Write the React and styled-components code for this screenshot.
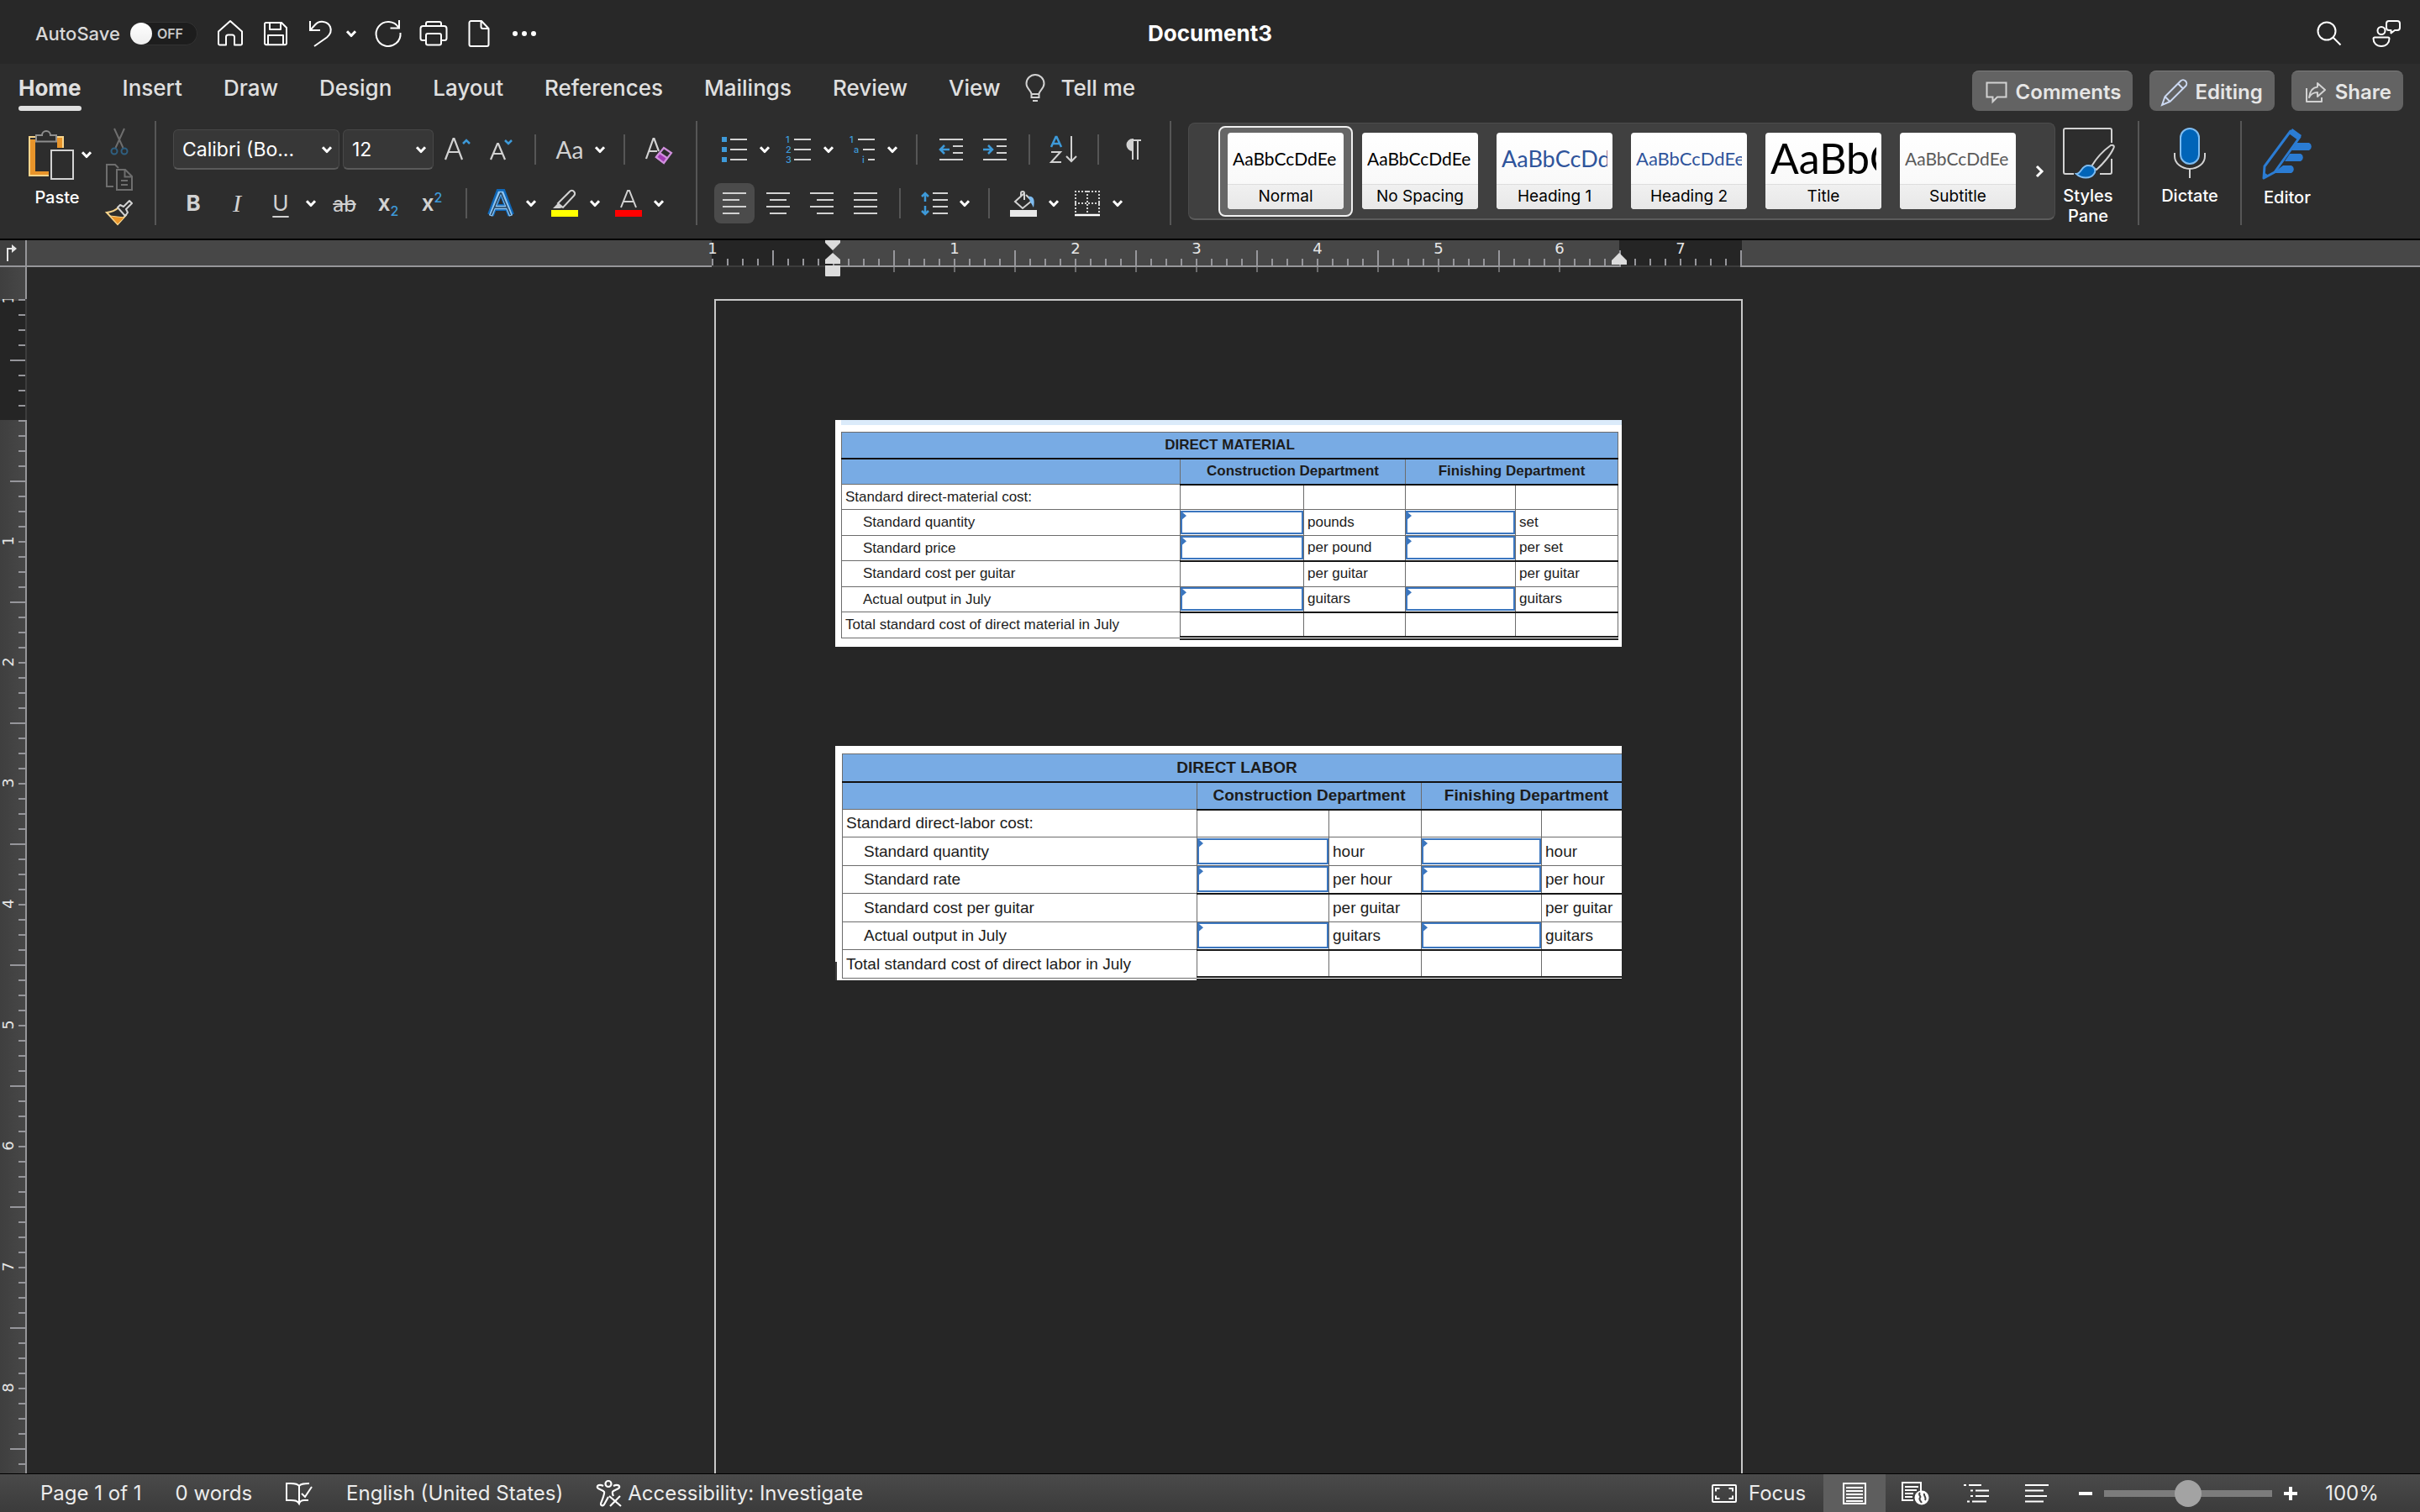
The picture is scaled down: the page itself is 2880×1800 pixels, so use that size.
import React from "react";
import styled, { createGlobalStyle, css } from "styled-components";

const UI = `Inter, "Liberation Sans", sans-serif`;
const SHEET = `"Liberation Sans", Arial, sans-serif`;
const SAMPLE = `Lato, "Open Sans", sans-serif`;

const GlobalStyle = createGlobalStyle`
  *, *::before, *::after { box-sizing: border-box; }
  html, body { margin: 0; background: #282828; }
  body { font-family: ${UI}; color: #e0e0e0; }
  button, input, select { font: inherit; color: inherit; margin: 0; }
  svg { display: block; flex: none; overflow: visible; }
`;

/* ---------- shell ---------- */

const Window = styled.div`
  height: 100vh;
  display: flex;
  flex-direction: column;
  overflow: hidden;
  background: #282828;
`;

const TitleBar = styled.header`
  flex: none;
  height: 76px;
  padding: 4px 17px 0;
  display: grid;
  grid-template-columns: 1fr auto 1fr;
  align-items: center;
  background: #282828;
`;

const TitleGroup = styled.div`
  display: flex;
  align-items: center;
  gap: ${(p) => p.$gap || 8}px;
  padding-left: 25px;
  justify-content: ${(p) => (p.$end ? "flex-end" : "flex-start")};
`;

const DocTitle = styled.h1`
  margin: 0;
  font-size: 26px;
  line-height: 32px;
  font-weight: 700;
  color: #fff;
`;

const AutoSave = styled.label`
  display: flex;
  align-items: center;
  gap: 12px;
  margin-right: 8px;
  font-size: 22px;
  line-height: 28px;
  font-weight: 500;
  color: #d8d8d8;
`;

const Switch = styled.span`
  display: flex;
  align-items: center;
  gap: 6px;
  width: 80px;
  height: 28px;
  border-radius: 14px;
  background: #1d1d1d;
  box-shadow: inset 0 0 0 1px #333;
  font-size: 16px;
  font-weight: 600;
  color: #c8c8c8;
`;

const SwitchInput = styled.input`
  appearance: none;
  width: 26px;
  height: 26px;
  border-radius: 50%;
  background: linear-gradient(#fff, #eee);
`;

const IconButton = styled.button`
  flex: none;
  display: flex;
  align-items: center;
  justify-content: center;
  width: ${(p) => p.$w || 48}px;
  height: 48px;
  padding: 0;
  border: 0;
  border-radius: 8px;
  background: ${(p) => (p.$active ? "#4b4b4b" : "transparent")};
`;

const Split = styled.div`
  display: flex;
  flex: none;
`;

/* ---------- tabs ---------- */

const TabBar = styled.nav`
  flex: none;
  height: 68px;
  padding: 8px 20px 0 22px;
  display: flex;
  align-items: flex-start;
  justify-content: space-between;
  background: #2d2d2d;
`;

const Tabs = styled.div`
  display: flex;
  align-items: flex-start;
  gap: ${(p) => p.$gap}px;
`;

const Tab = styled.button`
  display: flex;
  align-items: center;
  gap: 18px;
  padding: 5px 0 0;
  border: 0;
  background: none;
  font-size: 26px;
  line-height: 32px;
  font-weight: ${(p) => (p.$active ? 700 : 500)};
  color: #e0e0e0;
  position: relative;
  &::after {
    content: "";
    display: ${(p) => (p.$active ? "block" : "none")};
    position: absolute;
    left: 0;
    right: 0;
    bottom: -11px;
    height: 6px;
    border-radius: 3px;
    background: #e0e0e0;
  }
`;

const TabActions = styled.div`
  display: flex;
  gap: 20px;
`;

const ActionButton = styled.button`
  display: flex;
  align-items: center;
  gap: 10px;
  height: 48px;
  padding: 2px 14px 0 16px;
  border: 0;
  border-top: 1px solid #7a7a7a;
  border-radius: 8px;
  background: #636363;
  font-size: 24px;
  font-weight: 600;
  color: #e6e6e6;
`;

/* ---------- ribbon ---------- */

const Ribbon = styled.section`
  flex: none;
  height: 142px;
  padding-left: 32px;
  display: flex;
  align-items: flex-start;
  background: #2d2d2d;
  border-bottom: 2px solid #000;
`;

const GroupRule = styled.div`
  flex: none;
  width: 2px;
  height: 124px;
  margin: 0 20px;
  background: #565656;
`;

const Rows = styled.div`
  flex: none;
  display: flex;
  flex-direction: column;
  gap: 16px;
  padding-top: 10px;
`;

const Row = styled.div`
  display: flex;
  align-items: center;
  gap: 4px;
  height: 48px;
`;

const Rule = styled.div`
  flex: none;
  width: 2px;
  height: 36px;
  margin: 0 12px;
  background: #565656;
`;

const SelectBox = styled.div`
  display: grid;
  align-items: center;
  width: ${(p) => p.$w}px;
  height: 48px;
  & > * { grid-area: 1 / 1; }
  & > svg { justify-self: end; margin-right: 9px; pointer-events: none; }
`;

const Select = styled.select`
  appearance: none;
  width: 100%;
  height: 48px;
  padding: 0 10px;
  border: 1px solid #484848;
  border-bottom: 2px solid #5a5a5a;
  border-radius: 6px;
  background: #373737;
  font-size: 23px;
  color: #fff;
`;

const PasteGroup = styled.div`
  flex: none;
  display: flex;
  width: 132px;
  padding-top: 2px;
  justify-content: space-between;
`;

const SmallStack = styled.div`
  display: flex;
  flex-direction: column;
`;

const SmallButton = styled.button`
  width: 44px;
  height: 43px;
  padding: 0;
  display: flex;
  align-items: center;
  justify-content: center;
  border: 0;
  background: none;
`;

const BigButton = styled.button`
  flex: none;
  width: ${(p) => p.$w || 78}px;
  padding: ${(p) => p.$top ?? 8}px 0 0;
  display: flex;
  flex-direction: column;
  align-items: center;
  gap: 9px;
  border: 0;
  background: none;
  font-size: 20px;
  line-height: 24px;
  font-weight: 500;
  color: #fff;
`;

const IconPair = styled.span`
  display: flex;
  align-items: center;
  gap: 9px;
`;

const PasteLabel = styled.span`
  padding-right: 6px;
`;

const Gallery = styled.div`
  flex: 0 1 1032px;
  min-width: 0;
  height: 116px;
  margin-top: 2px;
  padding: 0 7px 0 35px;
  display: flex;
  align-items: center;
  justify-content: space-between;
  border: 1px solid #4c4c4c;
  border-bottom: 2px solid #5c5c5c;
  border-radius: 8px;
  background: #404040;
`;

const Cards = styled.div`
  display: flex;
  flex: none;
`;

const CardFrame = styled.button`
  width: 160px;
  height: 108px;
  padding: 6px 9px;
  border: 2px solid ${(p) => (p.$active ? "#f0f0f0" : "transparent")};
  border-radius: 8px;
  background: ${(p) => (p.$active ? "#666" : "none")};
`;

const Card = styled.span`
  display: grid;
  grid-template-rows: 61px 30px;
  height: 91px;
  border-radius: 4px;
  overflow: hidden;
  background: linear-gradient(#fff, #f6f6f6);
`;

const Sample = styled.span`
  display: flex;
  align-items: center;
  margin: 0 6px;
  overflow: hidden;
  white-space: nowrap;
  font-family: ${SAMPLE};
  font-size: ${(p) => p.$size}px;
  line-height: 61px;
  color: ${(p) => p.$color || "#000"};
`;

const CardName = styled.span`
  border-top: 1px solid #ddd;
  background: linear-gradient(#f0f0f0, #e8e8e8);
  font-size: 19px;
  line-height: 28px;
  color: #000;
`;

const MoreButton = styled.button`
  width: 22px;
  height: 48px;
  padding: 0;
  border: 0;
  background: none;
  display: flex;
  align-items: center;
  justify-content: center;
`;

/* ---------- workspace ---------- */

const RulerRow = styled.div`
  flex: none;
  height: 32px;
  display: flex;
  background: linear-gradient(#474747 30px, #969699 30px);
  position: relative;
  z-index: 1;
`;

const RulerCorner = styled.button`
  flex: none;
  width: 32px;
  height: 30px;
  padding: 0 0 0 7px;
  display: flex;
  align-items: center;
  border: 0;
  border-right: 2px solid #969699;
  background: #404040;
`;

const HRuler = styled.div`
  flex: 1;
  display: flex;
  justify-content: center;
  padding-left: 8px;
`;

const Work = styled.div`
  flex: 1;
  min-height: 0;
  display: flex;
  overflow: hidden;
`;

const VRuler = styled.div`
  flex: none;
  width: 32px;
  background: linear-gradient(90deg, #3f3f3f, #474747 30px, #969699 30px);
`;

const Canvas = styled.main`
  flex: 1;
  display: flex;
  justify-content: center;
  padding: 38px 0 0 12px;
`;

const Page = styled.article`
  width: 1224px;
  padding: 142px 142px 0;
  border: 2px solid #c8c8c8;
  border-bottom: 0;
  background: #262626;
  display: flex;
  flex-direction: column;
  gap: 118px;
`;

const Sheet = styled.figure`
  position: relative;
  margin: 0;
  width: 936px;
  padding: ${(p) => p.$pad};
  background: #fff;
  overflow: hidden;
`;

const Caret = styled.span`
  position: absolute;
  left: 0;
  bottom: 0;
  width: 2px;
  height: 22px;
  background: #3a3a3a;
`;

const Strip = styled.div`
  height: 6px;
  margin: 0 -6px 8px 0;
  background: #dbebfa;
`;

const Table = styled.table`
  table-layout: fixed;
  border-collapse: collapse;
  width: ${(p) => p.$w}px;
  font-family: ${SHEET};
  font-size: ${(p) => p.$size}px;
  line-height: 20px;
  color: #1c1c1c;
  tbody tr { height: ${(p) => p.$row}px; }
  tbody tr:nth-child(even) { height: ${(p) => p.$row + 1}px; }
  thead tr { height: ${(p) => p.$head}px; }
`;

const Head = styled.th`
  padding: 0;
  font-weight: 700;
  background: #78abe4;
  border: 1px solid #6c6c6c;
  ${(p) => p.$dark && css`border-bottom: 2px solid #111;`}
`;

const Cell = styled.td`
  padding: 0 ${(p) => (p.$input ? 0 : 4)}px;
  padding-left: ${(p) => (p.$input ? 0 : p.$indent ? 25 : 4)}px;
  border: 1px solid #6c6c6c;
  text-align: left;
  white-space: nowrap;
  ${(p) => p.$dark && css`border-bottom: 2px solid #161616;`}
  ${(p) => p.$total && css`border-bottom: 5px double #222;`}
`;

const Plain = styled.span`
  font-weight: 400;
`;

const Entry = styled.div`
  display: grid;
  & > * { grid-area: 1 / 1; }
  &::after {
    content: "";
    grid-area: 1 / 1;
    width: 7px;
    height: 12px;
    background: #3b76bf;
    clip-path: polygon(0 0, 100% 50%, 0 100%);
  }
`;

const EntryInput = styled.input`
  width: 100%;
  min-width: 0;
  height: ${(p) => p.$h}px;
  padding: 0 8px;
  border: 2px solid #3b76bf;
  border-radius: 0;
  background: #fff;
  color: #1c1c1c;
  outline: 0;
`;

/* ---------- status bar ---------- */

const StatusBar = styled.footer`
  flex: none;
  height: 46px;
  padding: 0 30px 0 48px;
  display: flex;
  justify-content: space-between;
  border-top: 1px solid #000;
  background: linear-gradient(#4a4a4a, #3b3b3b);
  font-size: 24px;
  color: #ececec;
`;

const StatusGroup = styled.div`
  display: flex;
  align-items: center;
  gap: ${(p) => p.$gap}px;
`;

const StatusButton = styled.button`
  height: 45px;
  padding: 0;
  display: flex;
  align-items: center;
  justify-content: center;
  gap: ${(p) => p.$gap || 7}px;
  width: ${(p) => (p.$w ? `${p.$w}px` : "auto")};
  border: 0;
  background: ${(p) => (p.$active ? "#5e5e5e" : "none")};
`;

const Zoom = styled.input`
  appearance: none;
  width: 200px;
  height: 32px;
  background: linear-gradient(#7c7c7c, #7c7c7c) center / 100% 8px no-repeat;
  border-radius: 4px;
  &::-webkit-slider-thumb {
    appearance: none;
    width: 32px;
    height: 32px;
    border-radius: 50%;
    background: #a3a3a3;
  }
`;

/* ---------- icons ---------- */

const Svg = ({ w = 32, h = 32, sw = 2, c = "#fff", children, ...rest }) => (
  <svg width={w} height={h} viewBox={`0 0 ${w} ${h}`} fill="none" stroke={c} strokeWidth={sw} aria-hidden="true" {...rest}>
    {children}
  </svg>
);

const Chevron = () => (
  <Svg w={12} h={8} sw={3}><path d="M1 1.2 6 6.6 11 1.2" strokeLinejoin="round" /></Svg>
);
const BLUE = "#3e9ad9";
const GREY = "#d2d2d2";

const HomeIcon = () => <Svg><path d="M2 13.5 16 1l14 12.5V28a1.500 1.500 0 0 1-1.500 1.500H21V20a2.500 2.500 0 0 0-2.500-2.500h-5A2.500 2.500 0 0 0 11 20v9.500H3.500A1.500 1.500 0 0 1 2 28z" strokeLinejoin="round" /></Svg>;
const SaveIcon = () => <Svg><path d="M4.500 3h18.500l6 6v18.500a1.800 1.800 0 0 1-1.800 1.800H4.800A1.800 1.800 0 0 1 3 27.500V4.500A1.500 1.500 0 0 1 4.500 3zM9 3v8h13V3M7 29V18h18v11" strokeLinejoin="round" /></Svg>;
const UndoIcon = () => <Svg><path d="M3 1v11h12M3.500 11.500 9 5.500C14-.2 24 .8 27 8c2 5-.5 9.500-4 12.500L8 31" /></Svg>;
const RedoIcon = () => <Svg><path d="M29 0v9.500H18.500M28.500 9A14.500 14.500 0 1 0 30.500 15" /></Svg>;
const PrintIcon = () => <Svg w={34}><path d="M8 7V4a2 2 0 0 1 2-2h14a2 2 0 0 1 2 2v3M8 24H4a2.500 2.500 0 0 1-2.500-2.500V10A3 3 0 0 1 4.500 7h25a3 3 0 0 1 3 3v11.500A2.500 2.500 0 0 1 30 24h-4M10 16h14a2 2 0 0 1 2 2v9.500a2 2 0 0 1-2 2H10a2 2 0 0 1-2-2V18a2 2 0 0 1 2-2z" /></Svg>;
const FileIcon = () => <Svg w={26}><path d="M3.500 1H16l8.500 9v19a2 2 0 0 1-2 2h-19a2 2 0 0 1-2-2V3a2 2 0 0 1 2-2zM15.500 1v7a2 2 0 0 0 2 2h7" strokeLinejoin="round" /></Svg>;
const DotsIcon = () => <Svg w={28} h={6} sw={0}><g fill="#fff"><circle cx="3" cy="3" r="3" /><circle cx="14" cy="3" r="3" /><circle cx="25" cy="3" r="3" /></g></Svg>;
const SearchIcon = () => <Svg w={30} h={30}><circle cx="12" cy="12" r="10.500" /><path d="m19.500 19.500 9 9" /></Svg>;
const PeopleIcon = () => <Svg w={34}><circle cx="11" cy="12.500" r="4.500" /><path d="M3 20.500h16a1.500 1.500 0 0 1 1.500 1.500c0 5-3.500 9-9.500 9s-9.500-4-9.500-9A1.500 1.500 0 0 1 3 20.500zM20 1h10a3 3 0 0 1 3 3v5a3 3 0 0 1-3 3h-3l-4.500 3.500V12H20a3 3 0 0 1-3-3V4a3 3 0 0 1 3-3z" strokeLinejoin="round" /></Svg>;
const BulbIcon = () => <Svg w={24} c={GREY}><path d="M7.500 23c0-4-6-6.500-6-12.500a10.500 10.500 0 0 1 21 0c0 6-6 8.500-6 12.500zM7.500 23v4h9v-4M9 31h6" /></Svg>;
const CommentIcon = () => <Svg w={26} h={26} c={GREY}><path d="M1.500 1.500h23v17H14l-5.500 5.500v-5.500h-7z" /></Svg>;
const PencilIcon = () => <Svg w={28} c="#ccd9f2"><path d="m-1 31 3.500-10L21 2.500a4 4 0 0 1 6 6L8.500 27zM18 5.500l6 6M2.500 21l6 6" /></Svg>;
const ShareIcon = () => <Svg w={26} h={26} c={GREY}><path d="M2 8v16h18v-5M15 2l9 8-9 8v-5c-5 0-8 2-10 6C6 11 9 7 15 6.500z" strokeLinejoin="round" /></Svg>;

const PasteIcon = () => (
  <Svg w={54} h={60}>
    <path d="M5 12v41h19M37 22V12h-5" stroke="#e8942a" strokeWidth="6" />
    <path d="M8 9H1v46h23M34 9h7v13" stroke="#f8d58c" />
    <path d="M9 14.500V7h7a5 5 0 0 1 10 0h7v7.500z" stroke="#8e8e8e" fill="#2d2d2d" />
    <path d="M27 25h26v34H27z" stroke={GREY} />
  </Svg>
);
const CutIcon = () => <Svg w={22} c="#6e6e6e"><path d="M5 1 15.500 24M17 1 6.500 24" /><g stroke="#2f5f80"><circle cx="5" cy="28" r="3.500" /><circle cx="17" cy="28" r="3.500" /></g></Svg>;
const CopyIcon = () => <Svg w={32} c="#6e6e6e"><path d="M9 27H1V1h10l4 4M13 7h10l8 8v16H13zM22.500 7v8.500H31M18 20h8M18 25h8" /></Svg>;
const BrushIcon = () => <Svg w={32}><path d="m1 15 13 14 10-11-9-9C12 12 7 14.500 1 15z" stroke="#f8d58c" /><path d="m5 19 17 2-8 8z" fill="#e8942a" stroke="#f8d58c" strokeWidth="1" /><path d="m14 9 3-3 4 2 7-7 3 3-7 7 2 4-3 4z" stroke={GREY} fill="#2d2d2d" strokeLinejoin="round" /></Svg>;

const GlyphText = styled.span`
  font-family: ${(p) => p.$family || UI};
  font-size: ${(p) => p.$size || 26}px;
  line-height: 32px;
  font-weight: ${(p) => p.$weight || 400};
  font-style: ${(p) => (p.$italic ? "italic" : "normal")};
  color: ${(p) => p.$color || GREY};
  text-decoration: ${(p) => p.$deco || "none"};
  text-decoration-thickness: 2px;
  text-underline-offset: 6px;
  sub, sup { font-size: 16px; line-height: 0; color: ${BLUE}; font-weight: 500; }
`;

const LetterA = ({ children, w = 32 }) => <Svg w={w} c={GREY} sw={2.2}>{children}</Svg>;
const GrowIcon = () => <LetterA><path d="M2 28 11.500 3h1L22 28M5.500 19h13" /><path d="m23 9 4-4 4 4" stroke={BLUE} strokeWidth="2.500" /></LetterA>;
const ShrinkIcon = () => <LetterA w={30}><path d="M3 28l8-19h1l8 19M6 21h11" /><path d="m20 5 4 4 4-4" stroke={BLUE} strokeWidth="2.500" /></LetterA>;
const ClearIcon = () => <LetterA><path d="M1 27 9.500 3h1L16 18M4.500 18H14" /><path d="m13 25 9-11 9 6-9 12z" stroke="#cf8fdc" /><path d="m13 25 4-5 9 6-4 6z" fill="#a33bb5" stroke="#cf8fdc" /></LetterA>;
const EffectIcon = () => <Svg w={32}><path d="M4 30 14 3h4l10 27M9 21h14" stroke="#0f67b8" strokeWidth="8" /><path d="M4 31 14.500 4h3L28 31M9 21h14" stroke="#8cc4f2" strokeWidth="4.500" /><path d="M4.500 30 15.500 4h1l11 26M9 21h14" stroke="#24415c" strokeWidth="1.500" /></Svg>;
const HighlightIcon = () => <Svg c={GREY}><path d="m8 16 14-14a3 3 0 0 1 5 0c2 2 1 4 0 5L14 21l-6-5z" /><path d="m2 22 6-6 6 5-4 1z" fill={GREY} stroke="none" /><path d="M0 24h32v8H0z" fill="#ff0" stroke="none" /></Svg>;
const FontColorIcon = () => <Svg c={GREY}><path d="m7 21 8-20h2l8 20M10 14h12" /><path d="M0 24h32v8H0z" fill="red" stroke="none" /></Svg>;

const BulletIcon = () => <Svg w={30} h={30} c={GREY}><path d="M10 3h20M10 15h20M10 27h20" /><path d="M0 0h6v6H0zM0 12h6v6H0zM0 24h6v6H0z" fill={BLUE} stroke="none" /></Svg>;
const NumGlyph = ({ x, y, children }) => <text x={x} y={y} fill={BLUE} stroke="none" fontFamily="Inter, sans-serif" fontSize="11" fontWeight="500">{children}</text>;
const NumberIcon = () => <Svg w={30} h={30} c={GREY}><path d="M10 3h20M10 15h20M10 27h20" /><NumGlyph x={0} y={7}>1</NumGlyph><NumGlyph x={0} y={19}>2</NumGlyph><NumGlyph x={0} y={31}>3</NumGlyph></Svg>;
const LevelsIcon = () => <Svg w={30} h={30} c={GREY}><path d="M10 3h20M16 15h14M22 27h8" /><NumGlyph x={0} y={7}>1</NumGlyph><NumGlyph x={5} y={19}>a</NumGlyph><NumGlyph x={15} y={31}>i</NumGlyph></Svg>;
const IndentIcon = ({ out }) => <Svg w={28} h={28} c={GREY}><path d="M0 2h28M16 10h12M16 18h12M0 26h28" /><path d={out ? "M12 14H1M6 9l-5 5 5 5" : "M0 14h11M6 9l5 5-5 5"} stroke={BLUE} strokeWidth="2.500" /></Svg>;
const SortIcon = () => <Svg w={32}><path d="M1 13 6.500 1h1L13 13M3 9h8" stroke={BLUE} strokeWidth="2.500" /><path d="M1 19h11L1 31h12M25 0v30M19 24l6 6 6-6" stroke={GREY} /></Svg>;
const PilcrowIcon = () => <Svg w={20} h={24} c={GREY}><path d="M20 1H9M10 1v23M16 1v23" /><path d="M10 0v13a6.500 6.500 0 0 1 0-13z" fill={GREY} /></Svg>;
const alignPaths = {
  left: "M0 2h28M0 10h20M0 18h28M0 26h20",
  center: "M0 2h28M4 10h20M0 18h28M4 26h20",
  right: "M0 2h28M8 10h20M0 18h28M8 26h20",
  justify: "M0 2h28M0 10h28M0 18h28M0 26h28",
};
const AlignIcon = ({ kind }) => <Svg w={28} h={28} c={GREY}><path d={alignPaths[kind]} /></Svg>;
const SpacingIcon = () => <Svg w={32} h={28} c={GREY}><path d="M14 2h18M14 10h18M14 18h18M14 26h18" /><path d="M5 2v10M1 6l4-4 4 4M5 17v10M1 23l4 4 4-4" stroke={BLUE} strokeWidth="2.500" /></Svg>;
const ShadingIcon = () => <Svg c={GREY}><path d="M17 4 6 14l9 8 11-9-7-7M17 12V4a2 2 0 0 0-4 0v4" /><path d="M22 8c6-1 8 4 6 13-2-4-3-5-4-7z" fill="#7fbcf0" stroke="none" /><path d="M0 24h32v8H0z" fill="#e8e8e8" stroke="none" /></Svg>;
const BordersIcon = () => <Svg w={30} h={30} c={GREY}><path d="M0 1h30M0 15h30M1 0v26M15 0v26M29 0v26" strokeDasharray="2 2" /><path d="M0 29h30" stroke="#fff" strokeWidth="2.500" /></Svg>;

const StylesPaneIcon = () => <Svg w={60} h={60} c={GREY}><path d="M58 18V3a2 2 0 0 0-2-2H3a2 2 0 0 0-2 2v50a2 2 0 0 0 2 2h10M44 55h12a2 2 0 0 0 2-2V37" /><path d="M34 46C40 36 50 26 57 21c3-1 5 1 3 4-3 7-12 18-20 25z" fill="#2d2d2d" /><path d="M16 55c6 0 6-10 14-10s10 6 7 10c-4 6-15 6-21 0z" fill="#0064b8" stroke="#7fbcf0" /></Svg>;
const MicIcon = () => <Svg w={38} h={60} c={GREY}><path d="M1 30v4a18 15 0 0 0 36 0v-4M19 49v11" /><rect x="8" y="1" width="22" height="42" rx="11" fill="#0064b8" stroke="#7fbcf0" /></Svg>;
const EditorIcon = () => <Svg w={62} h={62}><path d="M42 18h15a5 5 0 0 1 0 9H36zM34 31h13a5 5 0 0 1 0 9H28zM26 45h10a5 5 0 0 1 0 9H14z" fill="#2b7cd3" stroke="none" /><path d="M4 46 35 4l11 7-30 42-13 7z" fill="#2d2d2d" stroke="#2b7cd3" strokeWidth="3" strokeLinejoin="round" /><path d="m37 1 11 8-4 6-11-8zM2 61l1-8 6 4z" fill="#2b7cd3" stroke="none" /></Svg>;

const ProofIcon = () => <Svg w={32} h={28}><path d="M16 27V5c-2-3-6-3-10-3H1v20h5c4 0 8 0 10 4 1-3 3-4 6-4h5M16 5c2-3 6-3 12-3" /><path d="m19 14 4 4 8-12" /></Svg>;
const AccessIcon = () => <Svg w={30} h={32} sw={2.2}><circle cx="14" cy="4.500" r="3.500" /><path d="M8 7c-4-2-8-1-7 2 1 2 7 3 8 5s-3 11-4 14c0 3 3 3 4 1l5-9M20 7c4-2 8-1 7 2-1 2-7 3-8 5-.5 2 0 3 1 5" strokeLinejoin="round" /><path d="m15 19 14 12M28 19 16 31" /></Svg>;
const FocusIcon = () => <Svg w={30} h={22}><rect x="1" y="1" width="28" height="20" rx="1" /><path d="M5 8.500V5h4.500M20.500 5H25v3.500M25 13.500V17h-4.500M9.500 17H5v-3.500" /></Svg>;
const PrintLayoutIcon = () => <Svg w={28} h={26}><path d="M1 1h26v24H1zM4 6h20M4 10h20M4 14h20M4 18h20M4 22h20" /></Svg>;
const WebIcon = () => <Svg w={34} h={28}><path d="M14 22H1V1h22v10M4 6h16M4 10h14M4 14h10M4 18h9" /><circle cx="24" cy="19" r="8.500" fill="#fff" stroke="none" /><path d="M22 13c-3 3 2 4 0 6s1 4 2 6M27 14c-1 3 3 4 1 8" stroke="#444" /></Svg>;
const OutlineIcon = () => <Svg w={30} h={22}><path d="M0 1h3M6 1h15M8 7.500h3M14 7.500h16M8 14h3M14 14h16M4 20.500h3M10 20.500h17" /></Svg>;
const DraftIcon = () => <Svg w={28} h={22}><path d="M0 1h28M0 7.500h22M0 14h26M0 20.500h22" /></Svg>;

/* ---------- rulers ---------- */

const INCH = 144;
const EIGHTH = 18;
const markings = (count) => Array.from({ length: count }, (_, i) => i);

const RulerText = styled.text`
  font-family: "DejaVu Sans", sans-serif;
  font-size: 18px;
  fill: #e6e6e6;
`;

const HorizontalScale = () => (
  <svg width="1226" height="32" viewBox="0 0 1226 32" aria-hidden="true">
    <path d="M0 0h144v30H0zM1080 0h146v30h-146z" fill="#252525" />
    <path d="M0 30h144v2H0zM1082 30h142v2h-142z" fill="#3c3c3c" />
    <g fill="#96969b">
      {markings(69).map((i) => (
        <rect key={i} x={i * EIGHTH} y={i % 8 === 4 ? 12 : 22} width="2" height={i % 8 === 4 ? 18 : 8} />
      ))}
      {markings(12).map((i) => (
        <rect key={i} x={216 + i * 72} y="32" width="2" height="6" fill="#6c6c6e" />
      ))}
    </g>
    {markings(9).filter((n) => n !== 1).map((n) => (
      <RulerText key={n} x={n * INCH + 1} y="16" textAnchor="middle">{n === 0 ? 1 : n - 1}</RulerText>
    ))}
    <g fill="#dcdcdc">
      <path d="M135 0h18v3l-9 9-9-9zM144 15l9 8v5h-18v-5zM135 30h18v12a1 1 0 0 1-1 1h-16a1 1 0 0 1-1-1z" />
      <path d="M1080 15l9 9v5h-18v-5z" />
    </g>
  </svg>
);

const VerticalScale = () => (
  <svg width="30" height="1620" viewBox="0 0 30 1620" aria-hidden="true">
    <path d="M0 40h30v142H0z" fill="#252525" />
    <path d="M30 38h2v144h-2z" fill="#3c3c3c" />
    <g fill="#96969b">
      {markings(88).map((i) => (
        <rect key={i} x={i % 8 === 4 ? 12 : 22} y={38 + i * EIGHTH} width={i % 8 === 4 ? 18 : 8} height="2" />
      ))}
    </g>
    <clipPath id="scale-start"><rect x="0" y="38" width="30" height="1582" /></clipPath>
    <g clipPath="url(#scale-start)">
      {markings(11).filter((n) => n !== 1).map((n) => (
        <RulerText key={n} textAnchor="middle" transform={`translate(16 ${38 + n * INCH}) rotate(-90)`}>{n === 0 ? 1 : n - 1}</RulerText>
      ))}
    </g>
  </svg>
);

/* ---------- cost tables ---------- */

const materialRows = [
  { label: "Standard quantity", units: ["pounds", "set"], input: true },
  { label: "Standard price", units: ["per pound", "per set"], input: true, dark: true },
  { label: "Standard cost per guitar", units: ["per guitar", "per guitar"] },
  { label: "Actual output in July", units: ["guitars", "guitars"], input: true, dark: true },
];
const laborRows = [
  { label: "Standard quantity", units: ["hour", "hour"], input: true },
  { label: "Standard rate", units: ["per hour", "per hour"], input: true, dark: true },
  { label: "Standard cost per guitar", units: ["per guitar", "per guitar"] },
  { label: "Actual output in July", units: ["guitars", "guitars"], input: true, dark: true },
];
const departments = ["Construction Department", "Finishing Department"];

function CostTable({ title, intro, total, rows, cols, width, head, row, size, entry }) {
  return (
    <Table $w={width} $head={head} $row={row} $size={size}>
      <colgroup>{cols.map((w, i) => <col key={i} width={w} />)}</colgroup>
      <thead>
        <tr><Head colSpan={5} $dark>{title}</Head></tr>
        <tr>
          <Head />
          {departments.map((d) => <Head key={d} colSpan={2} $dark scope="col">{d}</Head>)}
        </tr>
      </thead>
      <tbody>
        <tr><Cell as="th" scope="row"><Plain>{intro}</Plain></Cell><Cell /><Cell /><Cell /><Cell /></tr>
        {rows.map((r) => (
          <tr key={r.label}>
            <Cell as="th" scope="row" $indent><Plain>{r.label}</Plain></Cell>
            {r.units.map((unit, i) => (
              <React.Fragment key={i}>
                <Cell $input={r.input} $dark={r.dark}>
                  {r.input && (
                    <Entry><EntryInput $h={entry} aria-label={`${r.label}, ${departments[i]}`} /></Entry>
                  )}
                </Cell>
                <Cell $dark={r.dark}>{unit}</Cell>
              </React.Fragment>
            ))}
          </tr>
        ))}
        <tr>
          <Cell as="th" scope="row"><Plain>{total}</Plain></Cell>
          <Cell $total /><Cell $total /><Cell $total /><Cell $total />
        </tr>
      </tbody>
    </Table>
  );
}

/* ---------- app ---------- */

const tabNames = ["Home", "Insert", "Draw", "Design", "Layout", "References", "Mailings", "Review", "View"];

const cards = [
  { name: "Normal", size: 21, active: true },
  { name: "No Spacing", size: 21 },
  { name: "Heading 1", size: 27, color: "#2f549b" },
  { name: "Heading 2", size: 22, color: "#2f549b" },
  { name: "Title", size: 50 },
  { name: "Subtitle", size: 21, color: "#5a5a5a" },
];

const Tool = ({ label, active, w, children }) => (
  <IconButton type="button" aria-label={label} $active={active} $w={w}>{children}</IconButton>
);
const SplitTool = ({ label, w, more = 24, children }) => (
  <Split>
    <Tool label={label} w={w}>{children}</Tool>
    <Tool label={`${label} options`} w={more}><Chevron /></Tool>
  </Split>
);

export default function App() {
  return (
    <Window>
      <GlobalStyle />
      <TitleBar>
        <TitleGroup>
          <AutoSave>
            AutoSave
            <Switch><SwitchInput type="checkbox" role="switch" />OFF</Switch>
          </AutoSave>
          <Tool label="Home" w={46}><HomeIcon /></Tool>
          <Tool label="Save" w={46}><SaveIcon /></Tool>
          <SplitTool label="Undo" w={46} more={26}><UndoIcon /></SplitTool>
          <Tool label="Redo" w={46}><RedoIcon /></Tool>
          <Tool label="Print" w={46}><PrintIcon /></Tool>
          <Tool label="New" w={46}><FileIcon /></Tool>
          <Tool label="More" w={46}><DotsIcon /></Tool>
        </TitleGroup>
        <DocTitle>Document3</DocTitle>
        <TitleGroup $end $gap={22}>
          <Tool label="Search" w={46}><SearchIcon /></Tool>
          <Tool label="Collaborators" w={46}><PeopleIcon /></Tool>
        </TitleGroup>
      </TitleBar>

      <TabBar>
        <Tabs $gap={30}>
          <Tabs $gap={49}>
            {tabNames.map((name, i) => <Tab key={name} type="button" $active={i === 0}>{name}</Tab>)}
          </Tabs>
          <Tab type="button"><BulbIcon />Tell me</Tab>
        </Tabs>
        <TabActions>
          <ActionButton type="button"><CommentIcon />Comments</ActionButton>
          <ActionButton type="button"><PencilIcon />Editing</ActionButton>
          <ActionButton type="button"><ShareIcon />Share</ActionButton>
        </TabActions>
      </TabBar>

      <Ribbon>
        <PasteGroup>
          <BigButton type="button">
            <IconPair><PasteIcon /><Chevron /></IconPair>
            <PasteLabel>Paste</PasteLabel>
          </BigButton>
          <SmallStack>
            <SmallButton type="button" aria-label="Cut"><CutIcon /></SmallButton>
            <SmallButton type="button" aria-label="Copy"><CopyIcon /></SmallButton>
            <SmallButton type="button" aria-label="Format painter"><BrushIcon /></SmallButton>
          </SmallStack>
        </PasteGroup>
        <GroupRule />
        <Rows>
          <Row>
            <SelectBox $w={198}>
              <Select aria-label="Font"><option>Calibri (Bo...</option></Select>
              <Chevron />
            </SelectBox>
            <SelectBox $w={108}>
              <Select aria-label="Font size"><option>12</option></Select>
              <Chevron />
            </SelectBox>
            <Tool label="Increase font size"><GrowIcon /></Tool>
            <Tool label="Decrease font size"><ShrinkIcon /></Tool>
            <Rule />
            <SplitTool label="Change case"><GlyphText $family={SAMPLE} $size={28}>Aa</GlyphText></SplitTool>
            <Rule />
            <Tool label="Clear formatting"><ClearIcon /></Tool>
          </Row>
          <Row>
            <Tool label="Bold"><GlyphText $weight={700}>B</GlyphText></Tool>
            <Tool label="Italic"><GlyphText $family={`"Liberation Serif", serif`} $size={30} $italic>I</GlyphText></Tool>
            <SplitTool label="Underline"><GlyphText $deco="underline">U</GlyphText></SplitTool>
            <Tool label="Strikethrough"><GlyphText $deco="line-through" $family={SAMPLE}>ab</GlyphText></Tool>
            <Tool label="Subscript"><GlyphText $weight={600}>x<sub>2</sub></GlyphText></Tool>
            <Tool label="Superscript"><GlyphText $weight={600}>x<sup>2</sup></GlyphText></Tool>
            <Rule />
            <SplitTool label="Text effects"><EffectIcon /></SplitTool>
            <SplitTool label="Highlight"><HighlightIcon /></SplitTool>
            <SplitTool label="Font color"><FontColorIcon /></SplitTool>
          </Row>
        </Rows>
        <GroupRule />
        <Rows>
          <Row>
            <SplitTool label="Bullets"><BulletIcon /></SplitTool>
            <SplitTool label="Numbering"><NumberIcon /></SplitTool>
            <SplitTool label="Multilevel list"><LevelsIcon /></SplitTool>
            <Rule />
            <Tool label="Decrease indent"><IndentIcon out /></Tool>
            <Tool label="Increase indent"><IndentIcon /></Tool>
            <Rule />
            <Tool label="Sort"><SortIcon /></Tool>
            <Rule />
            <Tool label="Show marks"><PilcrowIcon /></Tool>
          </Row>
          <Row>
            <Tool label="Align left" active><AlignIcon kind="left" /></Tool>
            <Tool label="Center"><AlignIcon kind="center" /></Tool>
            <Tool label="Align right"><AlignIcon kind="right" /></Tool>
            <Tool label="Justify"><AlignIcon kind="justify" /></Tool>
            <Rule />
            <SplitTool label="Line spacing"><SpacingIcon /></SplitTool>
            <Rule />
            <SplitTool label="Shading"><ShadingIcon /></SplitTool>
            <SplitTool label="Borders"><BordersIcon /></SplitTool>
          </Row>
        </Rows>
        <GroupRule />
        <Gallery>
          <Cards>
            {cards.map((c) => (
              <CardFrame key={c.name} type="button" $active={c.active}>
                <Card>
                  <Sample $size={c.size} $color={c.color}>AaBbCcDdEe</Sample>
                  <CardName>{c.name}</CardName>
                </Card>
              </CardFrame>
            ))}
          </Cards>
          <MoreButton type="button" aria-label="More styles">
            <Svg w={9} h={14} sw={3}><path d="m1 1 6 6-6 6" /></Svg>
          </MoreButton>
        </Gallery>
        <BigButton type="button"><StylesPaneIcon /><span>Styles<br />Pane</span></BigButton>
        <GroupRule />
        <BigButton type="button" $w={80}><MicIcon />Dictate</BigButton>
        <GroupRule />
        <BigButton type="button" $w={68}><EditorIcon />Editor</BigButton>
      </Ribbon>

      <RulerRow>
        <RulerCorner type="button" aria-label="Tab stop">
          <Svg w={14} h={20} c="#e6e6e6"><path d="M2 20V5h6" /><path d="m7 0 6 5-6 5z" fill="#e6e6e6" stroke="none" /></Svg>
        </RulerCorner>
        <HRuler><HorizontalScale /></HRuler>
      </RulerRow>

      <Work>
        <VRuler><VerticalScale /></VRuler>
        <Canvas>
          <Page>
            <Sheet $pad="0 6px 8px 7px">
              <Strip />
              <CostTable
                title="DIRECT MATERIAL"
                intro="Standard direct-material cost:"
                total="Total standard cost of direct material in July"
                rows={materialRows}
                cols={[403, 147, 121, 131, 122]}
                width={924} head={31} row={30} size={17} entry={28}
              />
            </Sheet>
            <Sheet $pad="9px 0 0 8px">
              <CostTable
                title="DIRECT LABOR"
                intro="Standard direct-labor cost:"
                total="Total standard cost of direct labor in July"
                rows={laborRows}
                cols={[422, 157, 110, 143, 107]}
                width={939} head={33} row={33} size={19} entry={31}
              />
              <Caret />
            </Sheet>
          </Page>
        </Canvas>
      </Work>

      <StatusBar>
        <StatusGroup $gap={40}>
          <span>Page 1 of 1</span>
          <span>0 words</span>
          <StatusButton type="button" aria-label="Proofing"><ProofIcon /></StatusButton>
          <StatusButton type="button">English (United States)</StatusButton>
          <StatusButton type="button"><AccessIcon />Accessibility: Investigate</StatusButton>
        </StatusGroup>
        <StatusGroup $gap={0}>
          <StatusButton type="button" $w={154} $gap={14}><FocusIcon />Focus</StatusButton>
          <StatusButton type="button" aria-label="Print layout" $w={74} $active><PrintLayoutIcon /></StatusButton>
          <StatusButton type="button" aria-label="Web layout" $w={72}><WebIcon /></StatusButton>
          <StatusButton type="button" aria-label="Outline" $w={72}><OutlineIcon /></StatusButton>
          <StatusButton type="button" aria-label="Draft" $w={72}><DraftIcon /></StatusButton>
          <StatusButton type="button" aria-label="Zoom out" $w={44}><Svg w={16} h={4} sw={4}><path d="M0 2h16" /></Svg></StatusButton>
          <Zoom type="range" aria-label="Zoom" min="0" max="100" defaultValue="50" />
          <StatusButton type="button" aria-label="Zoom in" $w={44}><Svg w={16} h={16} sw={4}><path d="M0 8h16M8 0v16" /></Svg></StatusButton>
          <StatusButton type="button" $w={102}>100%</StatusButton>
        </StatusGroup>
      </StatusBar>
    </Window>
  );
}
